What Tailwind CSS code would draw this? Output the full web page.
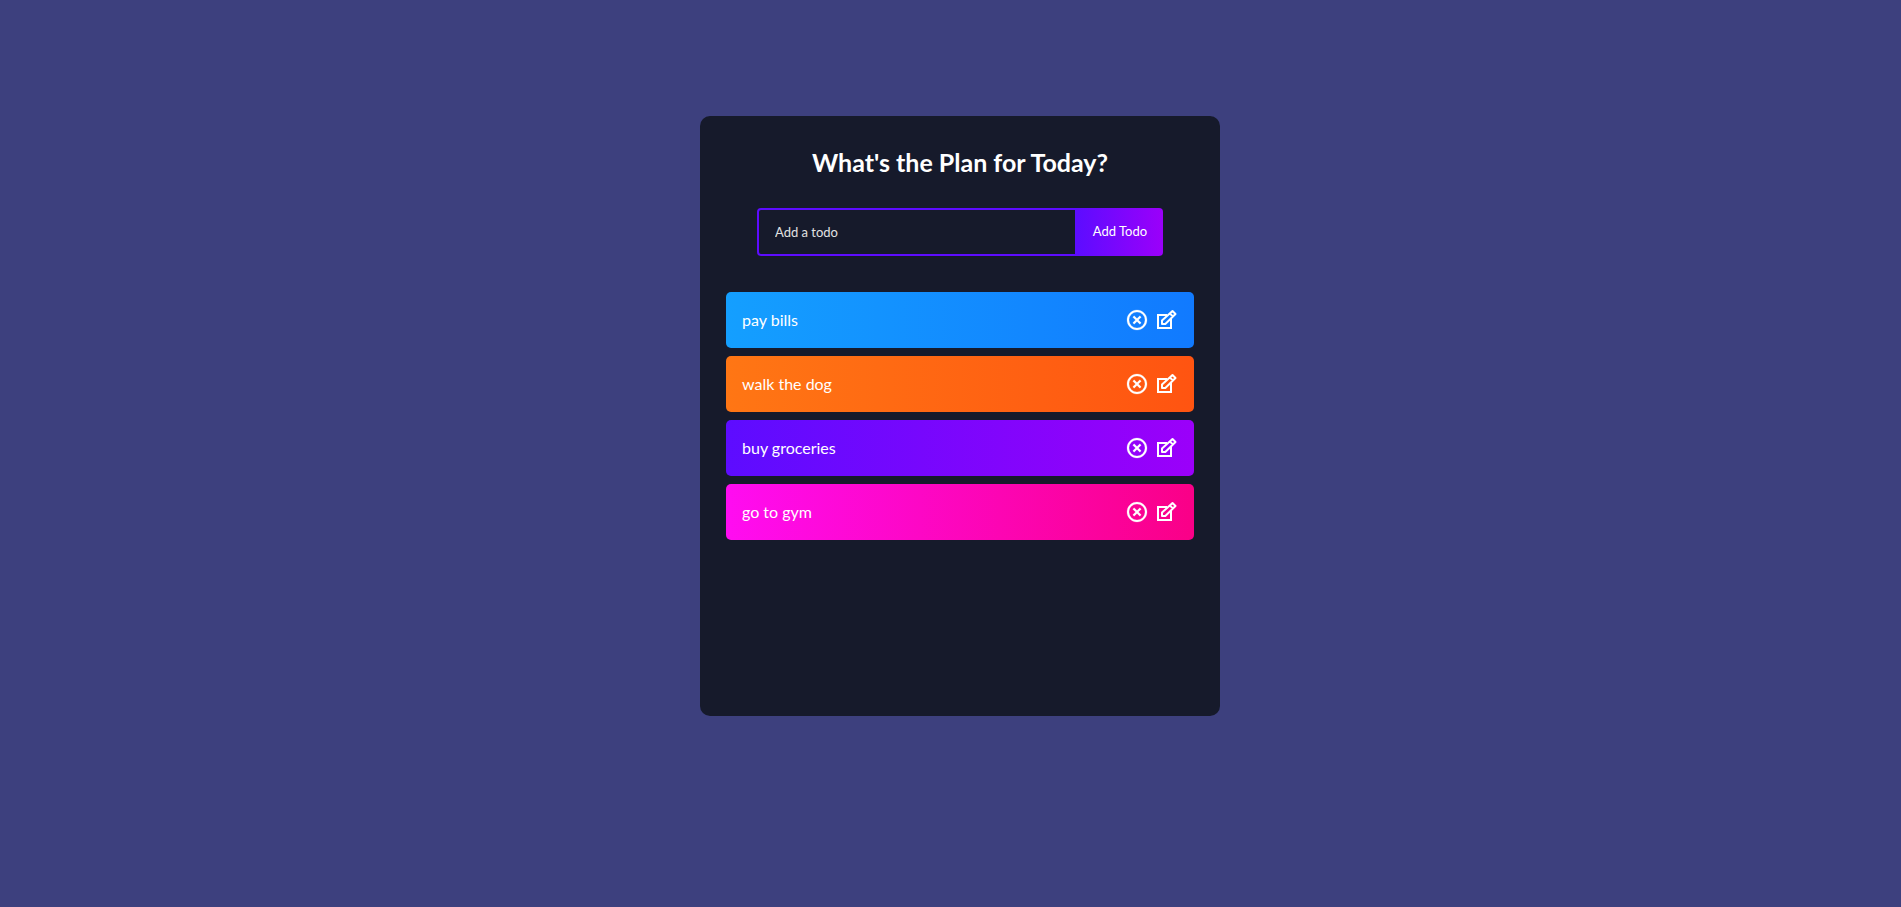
<!DOCTYPE html>
<html lang="en">
<head>
<meta charset="utf-8">
<meta name="viewport" content="width=device-width, initial-scale=1">
<title>Todo App</title>
<script src="https://cdn.jsdelivr.net/npm/@tailwindcss/browser@4"></script>
</head>
<body class="min-h-screen bg-[#3d407e] pr-4 pl-[35px] font-['Lato',sans-serif] text-white">
<svg class="hidden" aria-hidden="true">
  <symbol id="close-circle" viewBox="0 0 24 24"><path stroke="currentColor" stroke-width=".2" d="M12 22C6.477 22 2 17.523 2 12S6.477 2 12 2s10 4.477 10 10-4.477 10-10 10zm0-2a8 8 0 1 0 0-16 8 8 0 0 0 0 16zm0-9.414l2.828-2.829 1.415 1.415L13.414 12l2.829 2.828-1.415 1.415L12 13.414l-2.828 2.829-1.415-1.415L10.586 12 7.757 9.172l1.415-1.415L12 10.586z"/></symbol>
  <symbol id="edit" viewBox="0 0 24 24"><g fill="none" stroke="currentColor" stroke-width="2"><path d="M13 7H4v13h13v-9"/><path stroke-linejoin="round" d="M8 16V12.600L18.500 3 21.500 6 11.300 16zM15.800 5.400L18.900 8.500"/></g></symbol>
</svg>
<main class="mx-auto mt-29 min-h-150 max-w-130 rounded-[10px] bg-[#161a2b] pb-8 text-center">
  <h1 class="pt-8 pb-8 text-[25px] leading-7 font-bold">What's the Plan for Today?</h1>
  <form class="mb-9 flex justify-center px-4" onsubmit="return false">
    <input type="text" aria-label="Add a todo" placeholder="Add a todo" class="h-12 w-80 min-w-0 rounded-l-sm border-2 border-[#5d0cff] bg-transparent pr-8 pl-4 text-[13px] text-white outline-none placeholder:text-[#e2e2e2]">
    <button type="submit" class="h-12 w-[86px] shrink-0 cursor-pointer rounded-r-sm bg-linear-[90deg,#5d0cff_0%,#9b00fa_100%] text-center text-[13px]">Add Todo</button>
  </form>
  <ul class="mx-auto flex w-9/10 flex-col gap-2">
    <li class="flex h-14 items-center justify-between rounded-[5px] bg-linear-[90deg,#149fff_0%,#117aff_100%] px-4">
      <span>pay bills</span>
      <span class="flex gap-[5px]"><button type="button" aria-label="Delete pay bills" class="cursor-pointer"><svg class="size-6 fill-current"><use href="#close-circle"/></svg></button><button type="button" aria-label="Edit pay bills" class="cursor-pointer"><svg class="size-6 fill-current"><use href="#edit"/></svg></button></span>
    </li>
    <li class="flex h-14 items-center justify-between rounded-[5px] bg-linear-[90deg,#ff7614_0%,#ff5411_100%] px-4">
      <span>walk the dog</span>
      <span class="flex gap-[5px]"><button type="button" aria-label="Delete walk the dog" class="cursor-pointer"><svg class="size-6 fill-current"><use href="#close-circle"/></svg></button><button type="button" aria-label="Edit walk the dog" class="cursor-pointer"><svg class="size-6 fill-current"><use href="#edit"/></svg></button></span>
    </li>
    <li class="flex h-14 items-center justify-between rounded-[5px] bg-linear-[90deg,#5d0cff_0%,#9b00fa_100%] px-4">
      <span>buy groceries</span>
      <span class="flex gap-[5px]"><button type="button" aria-label="Delete buy groceries" class="cursor-pointer"><svg class="size-6 fill-current"><use href="#close-circle"/></svg></button><button type="button" aria-label="Edit buy groceries" class="cursor-pointer"><svg class="size-6 fill-current"><use href="#edit"/></svg></button></span>
    </li>
    <li class="flex h-14 items-center justify-between rounded-[5px] bg-linear-[90deg,#ff0cf1_0%,#fa0087_100%] px-4">
      <span>go to gym</span>
      <span class="flex gap-[5px]"><button type="button" aria-label="Delete go to gym" class="cursor-pointer"><svg class="size-6 fill-current"><use href="#close-circle"/></svg></button><button type="button" aria-label="Edit go to gym" class="cursor-pointer"><svg class="size-6 fill-current"><use href="#edit"/></svg></button></span>
    </li>
  </ul>
</main>
</body>
</html>
